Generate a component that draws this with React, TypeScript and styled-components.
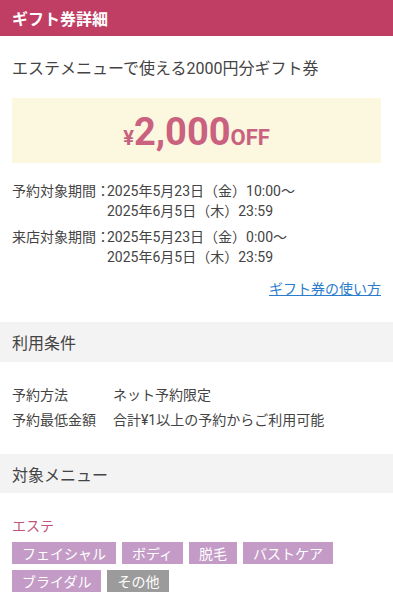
import React from "react";
import styled, { createGlobalStyle } from "styled-components";

const Global = createGlobalStyle`
  html, body { margin: 0; padding: 0; background: #fff; }
  body {
    font-family: Roboto, "Noto Sans CJK JP", sans-serif;
    color: #444;
    -webkit-font-smoothing: antialiased;
  }
`;

const Page = styled.div`
  width: 393px;
  display: flex;
  flex-direction: column;
`;

const TitleBar = styled.header`
  height: 36px;
  background: #c03d63;
  color: #fff;
  display: flex;
  align-items: center;
  padding: 0 12px;
  font-size: 16px;
  font-weight: 700;
`;

const Body = styled.div`
  padding: 0 12px;
  display: flex;
  flex-direction: column;
`;

const Subtitle = styled.h1`
  margin: 21px 0 0;
  font-size: 16px;
  font-weight: 400;
  line-height: 24px;
  color: #444;
`;

const PriceBox = styled.div`
  margin-top: 17px;
  height: 65px;
  background: #fcf7df;
  display: flex;
  align-items: center;
  justify-content: center;
  color: #c9617f;
  font-weight: 700;
`;

const Price = styled.span`
  display: flex;
  align-items: baseline;
  margin-top: 2px;
`;

const Unit = styled.span<{ $size: number }>`
  font-size: ${(p) => p.$size}px;
  line-height: 1;
`;

const Periods = styled.dl`
  margin: 18px 0 0;
  display: grid;
  grid-template-columns: 95px 1fr;
  row-gap: 6px;
  font-size: 14px;
  line-height: 20px;
  color: #444;
`;

const PeriodLabel = styled.dt`
  margin: 0;
  white-space: nowrap;
`;

const PeriodValue = styled.dd`
  margin: 0;
`;

const LinkRow = styled.div`
  margin-top: 12px;
  display: flex;
  justify-content: flex-end;
`;

const HowTo = styled.a`
  font-size: 14px;
  line-height: 20px;
  color: #2a7dcc;
  text-decoration: underline;
`;

const SectionHead = styled.h2<{ $top: number; $h: number }>`
  margin: ${(p) => p.$top}px 0 0;
  height: ${(p) => p.$h}px;
  background: #f3f3f3;
  display: flex;
  align-items: center;
  padding: 0 12px;
  font-size: 16px;
  font-weight: 400;
  color: #444;
`;

const Conditions = styled.dl`
  margin: 22px 12px 0;
  display: grid;
  grid-template-columns: 101px 1fr;
  row-gap: 3px;
  font-size: 14px;
  line-height: 22px;
  color: #444;
`;

const CondLabel = styled.dt`
  margin: 0;
`;

const CondValue = styled.dd`
  margin: 0;
`;

const Category = styled.div`
  margin: 23px 12px 0;
  font-size: 14px;
  line-height: 20px;
  color: #c0567a;
`;

const Tags = styled.div`
  margin: 6px 12px 0;
  display: flex;
  flex-wrap: wrap;
  gap: 6px 6px;
`;

const Tag = styled.span<{ $muted?: boolean }>`
  height: 22px;
  padding: 0 10px;
  display: inline-flex;
  align-items: center;
  background: ${(p) => (p.$muted ? "#9b9b9b" : "#c39bc6")};
  color: #fff;
  font-size: 14px;
`;

export default function App() {
  return (
    <Page>
      <Global />
      <TitleBar>ギフト券詳細</TitleBar>
      <Body>
        <Subtitle>エステメニューで使える2000円分ギフト券</Subtitle>
        <PriceBox>
          <Price>
            <Unit $size={20}>¥</Unit>
            <Unit $size={38}>2,000</Unit>
            <Unit $size={22}>OFF</Unit>
          </Price>
        </PriceBox>
        <Periods>
          <PeriodLabel>予約対象期間：</PeriodLabel>
          <PeriodValue>
            2025年5月23日（金）10:00〜
            <br />
            2025年6月5日（木）23:59
          </PeriodValue>
          <PeriodLabel>来店対象期間：</PeriodLabel>
          <PeriodValue>
            2025年5月23日（金）0:00〜
            <br />
            2025年6月5日（木）23:59
          </PeriodValue>
        </Periods>
        <LinkRow>
          <HowTo href="#">ギフト券の使い方</HowTo>
        </LinkRow>
      </Body>
      <SectionHead $top={23} $h={40}>利用条件</SectionHead>
      <Conditions>
        <CondLabel>予約方法</CondLabel>
        <CondValue>ネット予約限定</CondValue>
        <CondLabel>予約最低金額</CondLabel>
        <CondValue>合計¥1以上の予約からご利用可能</CondValue>
      </Conditions>
      <SectionHead $top={23} $h={39}>対象メニュー</SectionHead>
      <Category>エステ</Category>
      <Tags>
        <Tag>フェイシャル</Tag>
        <Tag>ボディ</Tag>
        <Tag>脱毛</Tag>
        <Tag>バストケア</Tag>
        <Tag>ブライダル</Tag>
        <Tag $muted>その他</Tag>
      </Tags>
    </Page>
  );
}
